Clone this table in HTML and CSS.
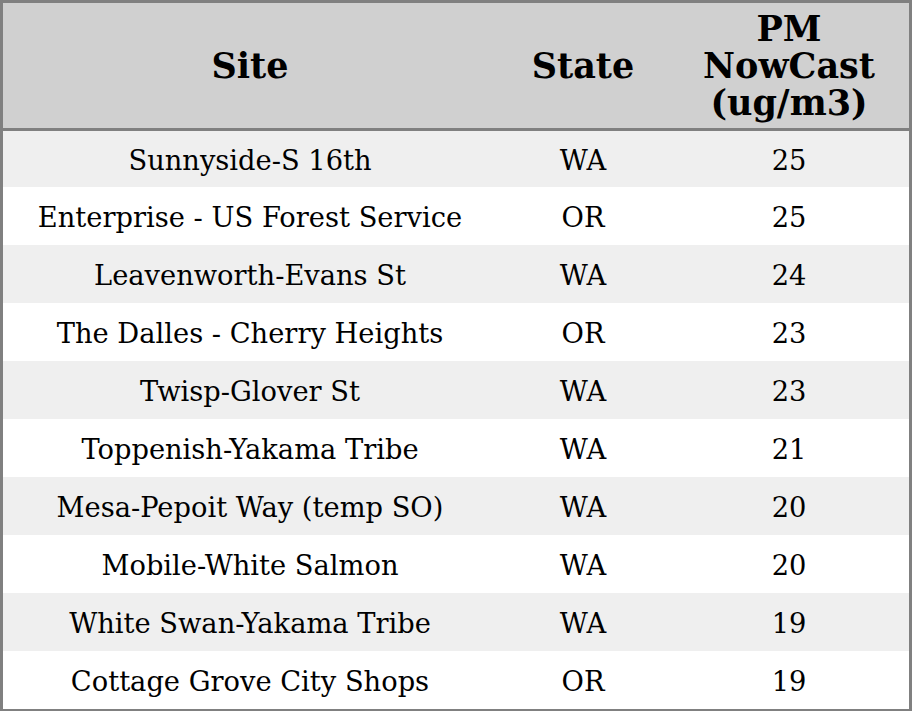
FILE: index.html
```html
<!DOCTYPE html>
<html>
<head>
<meta charset="utf-8">
<link rel="stylesheet" href="styles.css">
</head>
<body>
<table class="aq">
  <thead>
    <tr>
      <th class="c-site">Site</th>
      <th class="c-state">State</th>
      <th class="c-pm">PM<br>NowCast<br>(ug/m3)</th>
    </tr>
  </thead>
  <tbody>
    <tr class="first"><td>Sunnyside-S 16th</td><td>WA</td><td>25</td></tr>
    <tr><td>Enterprise - US Forest Service</td><td>OR</td><td>25</td></tr>
    <tr><td>Leavenworth-Evans St</td><td>WA</td><td>24</td></tr>
    <tr><td>The Dalles - Cherry Heights</td><td>OR</td><td>23</td></tr>
    <tr><td>Twisp-Glover St</td><td>WA</td><td>23</td></tr>
    <tr><td>Toppenish-Yakama Tribe</td><td>WA</td><td>21</td></tr>
    <tr><td>Mesa-Pepoit Way (temp SO)</td><td>WA</td><td>20</td></tr>
    <tr><td>Mobile-White Salmon</td><td>WA</td><td>20</td></tr>
    <tr><td>White Swan-Yakama Tribe</td><td>WA</td><td>19</td></tr>
    <tr><td>Cottage Grove City Shops</td><td>OR</td><td>19</td></tr>
  </tbody>
</table>
</body>
</html>
```
FILE: styles.css
```css
html, body {
  margin: 0;
  padding: 0;
  background: #ffffff;
}
.aq {
  box-sizing: border-box;
  width: 912px;
  height: 711px;
  border-collapse: separate;
  border-spacing: 0;
  border: 3px solid #808080;
  font-family: "DejaVu Serif", serif;
  color: #000;
  table-layout: fixed;
}
.aq th {
  box-sizing: border-box;
  background: #d0d0d0;
  font-size: 35px;
  font-weight: bold;
  line-height: 37px;
  height: 128px;
  padding: 0;
  border-bottom: 3px solid #808080;
  text-align: center;
  vertical-align: middle;
}
.c-site { width: 494px; }
.c-state { width: 172px; }
.aq td {
  box-sizing: border-box;
  font-size: 27.3px;
  line-height: 32px;
  text-align: center;
  vertical-align: middle;
  padding: 4px 0 0;
  height: 58px;
}
.aq tbody tr.first td { height: 56px; }
.aq tbody tr:nth-child(odd) td { background: #efefef; }
.aq tbody tr:nth-child(even) td { background: #ffffff; }
```
